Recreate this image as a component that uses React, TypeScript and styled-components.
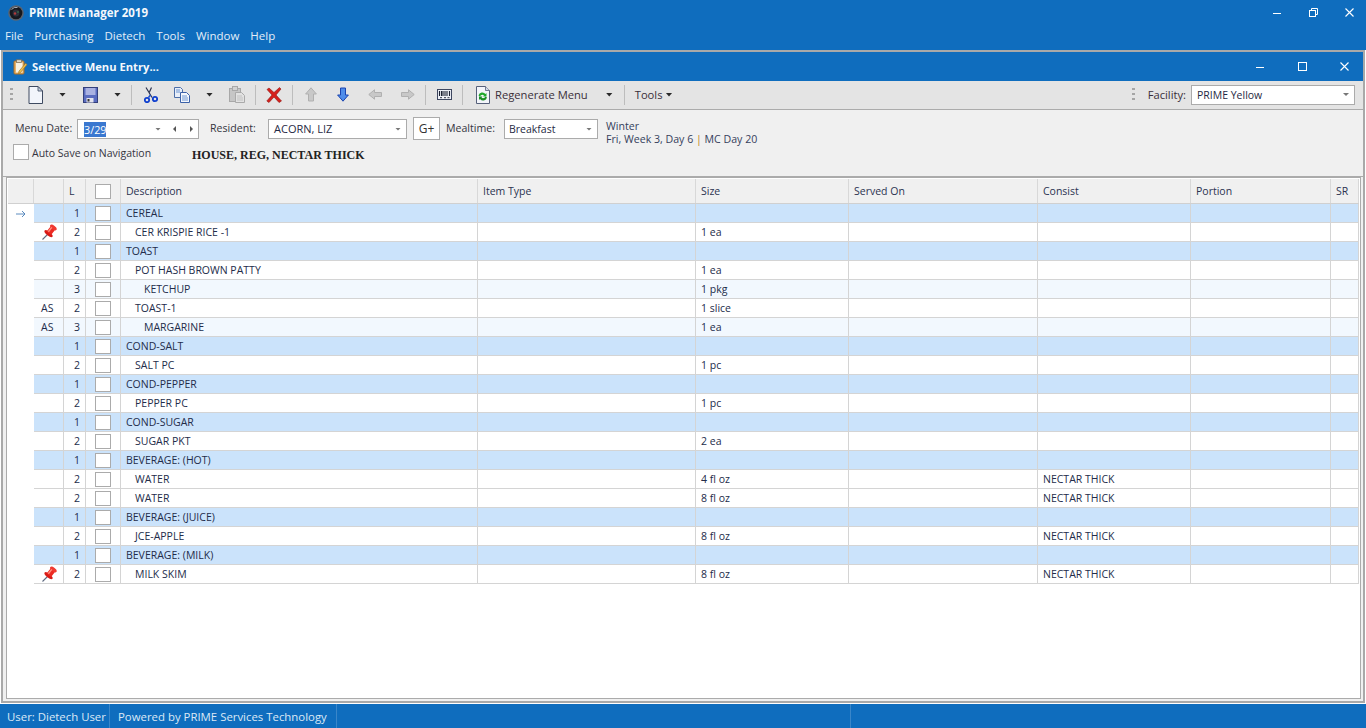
import React from "react";
import styled, { createGlobalStyle } from "styled-components";

const Global = createGlobalStyle`
  html, body { margin: 0; padding: 0; width: 1366px; height: 728px; overflow: hidden; background: #fff; }
  * { box-sizing: border-box; }
  body { font-family: "Open Sans", "Noto Sans", sans-serif; font-size: 11px; color: #1f2a44; }
`;

const BLUE = "#0f6dbe";

const Shell = styled.div`
  width: 1366px; height: 728px; display: flex; flex-direction: column; background: #fff;
`;
const TitleBar = styled.div`
  height: 25px; background: ${BLUE}; display: flex; align-items: center; color: #fff; padding-left: 8px; flex: none;
`;
const AppName = styled.span`
  margin-left: 5px; font-weight: 700; font-size: 11.5px; color: #f4f8fc;
`;
const Controls = styled.div<{ $gap: number }>`
  margin-left: auto; display: flex; gap: ${p => p.$gap}px; height: 100%;
`;
const ControlBtn = styled.div<{ $w: number }>`
  width: ${p => p.$w}px; display: flex; align-items: center; justify-content: center;
`;
const MenuBar = styled.div`
  height: 25px; background: ${BLUE}; display: flex; gap: 11px; align-items: center; padding: 0 0 4px 5px; flex: none; color: #e4eef8; font-size: 11.5px;
`;
const Win = styled.div`
  flex: 1; min-height: 0; margin: 0 1px 1px 1px; border: 2px solid #a9a9a9; display: flex; flex-direction: column; background: #f0f0f0; width: 1364px;
`;
const WinTitle = styled.div`
  height: 29px; flex: none; background: ${BLUE}; display: flex; align-items: center; padding-left: 10px; color: #fff;
`;
const WinName = styled.span`
  margin-left: 4px; font-weight: 700; font-size: 11.2px; color: #f4f8fc;
`;
const Toolbar = styled.div`
  height: 29px; flex: none; background: #e4e4e4; border-bottom: 1px solid #ababab; display: flex; align-items: center; font-size: 11.2px; padding-bottom: 1px;
`;
const Slot = styled.div<{ $ml: number }>`
  margin-left: ${p => p.$ml}px; flex: none; display: flex; align-items: center; justify-content: center;
`;
const Grip = styled.div<{ $ml: number }>`
  margin-left: ${p => p.$ml}px; width: 3px; height: 13px; flex: none;
  background: repeating-linear-gradient(to bottom, #a5a5a5 0 2px, transparent 2px 5px);
`;
const Sep = styled.div<{ $ml: number }>`
  margin-left: ${p => p.$ml}px; width: 1px; height: 20px; background: #bdbdbd; flex: none;
`;
const Caret = styled.div<{ $ml: number }>`
  margin-left: ${p => p.$ml}px; flex: none; width: 7px; height: 4px;
  background: #2a2a2a; clip-path: polygon(0 0, 100% 0, 50% 100%);
`;
const FieldCaret = styled.div`
  flex: none; width: 6px; height: 3px; background: #777; clip-path: polygon(0 0, 100% 0, 50% 100%);
`;
const ToolText = styled.span<{ $ml: number }>`
  margin-left: ${p => p.$ml}px; flex: none; color: #3a2f3a; font-size: 11.2px;
`;
const Spring = styled.div`
  flex: 1;
`;
const FacilitySelect = styled.div`
  margin: 0 8px 0 5px; width: 164px; height: 20px; background: #fff; border: 1px solid #ababab; display: flex; align-items: center; padding: 0 5px; font-size: 10.5px; justify-content: space-between;
`;
const FormPanel = styled.div`
  height: 67px; flex: none; background: #f0f0f0; border-bottom: 1px solid #ababab; padding: 7px 0 0 12px;
`;
const FormRow = styled.div`
  display: flex; align-items: flex-start; height: 25px;
`;
const Label = styled.span<{ $ml?: number; $w: number }>`
  margin: 1px 0 0 ${p => p.$ml || 0}px; width: ${p => p.$w}px; flex: none; line-height: 20px; font-size: 10.6px; color: #35353f;
`;
const Field = styled.div<{ $w: number }>`
  width: ${p => p.$w}px; height: 20px; margin-top: 2px; flex: none; background: #fff; border: 1px solid #ababab; display: flex; align-items: center; padding: 0 5px; font-size: 11px; line-height: 18px;
`;
const MealField = styled(Field)`
  font-size: 10.5px; padding-left: 4px;
`;
const Selected = styled.span`
  background: #3a78d0; color: #fff; padding: 0; margin-left: 1px; height: 15px; line-height: 15px; display: block; flex: none; font-size: 10.8px;
`;
const FieldCarets = styled.div`
  margin-left: auto; display: flex; align-items: center; gap: 11px;
`;
const SideCaret = styled.div<{ $dir: "l" | "r"; $ml: number }>`
  width: 3px; height: 6px; margin-left: ${p => p.$ml}px; background: #555;
  clip-path: ${p => p.$dir === "l" ? "polygon(100% 0, 100% 100%, 0 50%)" : "polygon(0 0, 0 100%, 100% 50%)"};
`;
const GButton = styled.div`
  width: 27px; height: 23px; margin: 0 6px; flex: none; background: #fff; border: 1px solid #ababab; display: flex; align-items: center; justify-content: center; font-size: 12px; color: #333;
`;
const SeasonBox = styled.div`
  margin: 3px 0 0 8px; line-height: 13px; font-size: 10.6px; color: #35405c;
`;
const Bar = styled.span`
  color: #c07a20;
`;
const CheckRow = styled.div`
  display: flex; align-items: flex-start; margin-left: -2px; height: 18px; margin-top: 2px;
`;
const CheckBox = styled.div`
  width: 16px; height: 16px; flex: none; background: #fff; border: 1px solid #ababab;
`;
const AutoLabel = styled.span`
  margin: 2px 0 0 3px; width: 160px; flex: none; font-size: 10.5px; line-height: 15px; color: #35353f;
`;
const DietText = styled.span`
  font-family: "Liberation Serif", serif; font-weight: 700; font-size: 12px; line-height: 14px; color: #222; margin-top: 4px;
`;
const GridFrame = styled.div`
  flex: 1; min-height: 0; margin: 0 2px 2px 3px; border: 1px solid #ababab; padding: 1px; background: #fff;
`;
const COLS = "26px 30px 22px 35px 357px 218px 153px 189px 153px 140px 28px";
const HeaderRow = styled.div`
  display: grid; grid-template-columns: ${COLS}; height: 25px; background: #f0f0f0; border-bottom: 1px solid #d0d0d0;
`;
const HeadCell = styled.div`
  border-right: 1px solid #d8d8d8; padding-left: 5px; display: flex; align-items: center; font-size: 10.5px; color: #2b3350;
`;
const HeadCheckCell = styled(HeadCell)`
  padding-left: 9px;
`;
const Row = styled.div`
  display: grid; grid-template-columns: ${COLS}; height: 19px;
`;
const GutterCell = styled.div`
  background: #fff; display: flex; align-items: center; justify-content: center;
`;
const Cell = styled.div<{ $lv: number }>`
  background: ${p => p.$lv === 1 ? "#cbe3fb" : p.$lv === 3 ? "#f2f8fe" : "#fff"};
  border-right: 1px solid #d4d4d4; border-bottom: 1px solid #d4d4d4;
  display: flex; align-items: center; padding-left: 5px; font-size: 10.5px; color: #232c4a; white-space: pre;
  overflow: hidden;
`;
const NumCell = styled(Cell)`
  justify-content: flex-end; padding: 0 5px 0 0;
`;
const MarkCell = styled(Cell)`
  padding-left: 7px;
`;
const PinWrap = styled.div`
  margin: 0 0 1px 1px; display: flex;
`;
const CheckCell = styled(Cell)`
  padding-left: 9px;
`;
const DescCell = styled(Cell)<{ $indent: number }>`
  padding-left: ${p => 5 + p.$indent}px;
`;
const RowBox = styled.div`
  width: 16px; height: 15px; flex: none; background: #fff; border: 1px solid #ababab;
`;
const StatusBar = styled.div`
  height: 24px; flex: none; background: ${BLUE}; display: flex; align-items: center; color: #dce9f6; font-size: 11.4px;
`;
const StatusCell = styled.div<{ $w: number; $pl: number }>`
  width: ${p => p.$w}px; height: 100%; padding-left: ${p => p.$pl}px; border-right: 1px solid #3a86c9; display: flex; align-items: center; flex: none; white-space: nowrap;
`;

const ICON = { new: (
  <svg width="15" height="18" viewBox="0 0 15 18"><path d="M1 .5h9l4.500 4.500v12.500H1z" fill="#f2f5fb" stroke="#3e4a60" /><path d="M10 .5V5h4.500z" fill="#c7d0de" stroke="#3e4a60" strokeWidth=".8" /></svg>
), save: (
  <svg width="15" height="16" viewBox="0 0 15 16"><rect x=".5" y=".5" width="14" height="15" fill="#5a6cc0" stroke="#34407c" /><rect x="2.500" y="1" width="10" height="7" fill="#aab2e2" /><rect x="3.500" y="11" width="7" height="4.500" fill="#e4e4ee" /><rect x="4.500" y="12" width="2" height="2.500" fill="#333" /></svg>
), cut: (
  <svg width="14" height="16" viewBox="0 0 14 16"><path d="M2 .5l6 10M7.500.5L5 6" stroke="#2e3550" strokeWidth="1.200" fill="none" /><path d="M6.500 8l-2 2.500" stroke="#1b4fd0" strokeWidth="1.500" /><circle cx="3" cy="13" r="2.200" fill="none" stroke="#0f3fcf" strokeWidth="1.800" /><circle cx="11" cy="12" r="2.200" fill="none" stroke="#0f3fcf" strokeWidth="1.800" /></svg>
), copy: (
  <svg width="16" height="16" viewBox="0 0 16 16"><path d="M.5.500h6l2 2v8h-8z" fill="#e8eef8" stroke="#4c6ea8" /><path d="M6.500 5.500h6l3 3v7h-9z" fill="#f4f7fc" stroke="#3c62a8" /><path d="M8 9h5M8 11h6M8 13h6M2 3h4M2 5h4" stroke="#4c7ec8" strokeWidth=".8" /></svg>
), paste: (
  <svg width="16" height="17" viewBox="0 0 16 17"><rect x=".5" y="2.500" width="11" height="13" fill="#c6c6c6" stroke="#a8a8a8" /><rect x="3.500" y=".5" width="5" height="4" fill="#d2d2d2" stroke="#a8a8a8" /><path d="M6.500 6.500h6l3 3v7h-9z" fill="#e2e2e2" stroke="#aaa" /><path d="M8 10h5M8 12h6M8 14h6" stroke="#bbb" strokeWidth=".8" /></svg>
), del: (
  <svg width="16" height="16" viewBox="0 0 16 16"><path d="M1 2.500L3 1l5 4.500L13.500.5 15 2l-5 6 5.500 6L13 15.500 8 10l-5 5.500L.8 14 6 8z" fill="#d6201c" stroke="#8e1512" strokeWidth=".6" /></svg>
), up: (
  <svg width="12" height="15" viewBox="0 0 12 15"><path d="M6 .8L11.400 7H8.500v7h-5V7H.6z" fill="#c8c8c8" stroke="#b0b0b0" /></svg>
), down: (
  <svg width="12" height="15" viewBox="0 0 12 15"><path d="M6 14.200L11.400 8H8.500V1h-5v7H.6z" fill="#4f8dea" stroke="#1a44b0" /></svg>
), left: (
  <svg width="14" height="11" viewBox="0 0 14 11"><path d="M.8 5.500L6.500.8v2.700h7v4h-7v2.700z" fill="#c8c8c8" stroke="#b0b0b0" /></svg>
), right: (
  <svg width="14" height="11" viewBox="0 0 14 11"><path d="M13.200 5.500L7.500.8v2.700h-7v4h7v2.700z" fill="#c8c8c8" stroke="#b0b0b0" /></svg>
), barcode: (
  <svg width="15" height="11" viewBox="0 0 15 11"><rect x=".5" y=".5" width="14" height="10" fill="#eef1f8" stroke="#3e4760" /><path d="M2.500 2v5M4.500 2v5M6 2v5M8 2v5M10 2v5M12.500 2v5" stroke="#1c2233" strokeWidth="1.100" /><path d="M3 8.700h2M7 8.700h2M10.500 8.700h2" stroke="#1c2233" strokeWidth=".9" /></svg>
), regen: (
  <svg width="16" height="18" viewBox="0 0 16 18"><path d="M1.500.5h9l4 4v13h-13z" fill="#f3f5fa" stroke="#56607a" /><path d="M10.500.5v4h4" fill="#d4dae6" stroke="#56607a" strokeWidth=".8" /><path d="M3.500 9.500a4 4 0 017-1.500l1-1v3.500H8l1-1a2.500 2.500 0 00-4 1z" fill="#1fa82c" /><path d="M12 11.500a4 4 0 01-7 1.500l-1 1v-3.500h3.500l-1 1a2.500 2.500 0 004-1z" fill="#1a8f25" /></svg>
) };

const Logo = () => (
  <svg width="16" height="16" viewBox="0 0 16 16"><circle cx="8" cy="8" r="7.800" fill="#5b6470" /><circle cx="8" cy="8" r="6.300" fill="#16181e" /><circle cx="8" cy="8" r="3.400" fill="#2b2f3a" /><circle cx="7" cy="8.500" r="1.200" fill="#b33a3a" /><circle cx="10" cy="7" r=".7" fill="#3c9c58" /><path d="M3.500 4.500a6 6 0 016-2" stroke="#a8aeb8" fill="none" /></svg>
);
const DocLogo = () => (
  <svg width="15" height="16" viewBox="0 0 15 16"><rect x="1" y="2" width="10" height="13" rx="1" fill="#e8b268" stroke="#a86f28" /><rect x="3" y="3.500" width="6.500" height="10" fill="#f8f2e2" /><rect x="3.500" y=".8" width="5" height="2.800" fill="#ded6c6" stroke="#7a6a50" strokeWidth=".7" /><path d="M14 5.500L7.500 13.500l-2 1 .5-2.300L12.500 4.500z" fill="#eec050" stroke="#a87820" strokeWidth=".7" /></svg>
);
const Min = () => <svg width="8" height="8" viewBox="0 0 8 8"><path d="M0 4.500h8" stroke="#fff" /></svg>;
const Restore = () => <svg width="9" height="9" viewBox="0 0 9 9"><path d="M2.500 2V.5h6v6H7" fill="none" stroke="#fff" /><rect x=".5" y="2.500" width="6" height="6" fill="none" stroke="#fff" /></svg>;
const Max = () => <svg width="9" height="9" viewBox="0 0 9 9"><rect x=".5" y=".5" width="8" height="8" fill="none" stroke="#fff" /></svg>;
const Close = () => <svg width="9" height="9" viewBox="0 0 9 9"><path d="M.5.500l8 8M8.500.5l-8 8" stroke="#fff" strokeWidth="1.100" /></svg>;
const Arrow = () => <svg width="10" height="8" viewBox="0 0 10 8"><path d="M0 4h9M6 1l3 3-3 3" fill="none" stroke="#4a7fb8" strokeWidth=".9" /></svg>;
const Pin = () => (
  <svg width="15" height="16" viewBox="0 0 15 16">
    <path d="M.5 15.500L6 10" stroke="#5f6a80" strokeWidth="1.100" />
    <g transform="rotate(38 9 6.500)">
      <ellipse cx="9" cy="10.500" rx="5" ry="1.900" fill="#d81a16" />
      <rect x="6.200" y="3" width="5.600" height="7" fill="#ec2a22" />
      <ellipse cx="9" cy="2.600" rx="3.900" ry="1.900" fill="#f03a30" />
      <rect x="7" y="3.600" width="1.400" height="5.500" fill="#ff8f80" />
    </g>
  </svg>
);

type R = { l: number; d?: string; ind?: number; size?: string; cons?: string; mark?: "pin" | "AS"; cur?: boolean };
const rows: R[] = [
  { l: 1, d: "CEREAL", cur: true },
  { l: 2, d: "CER KRISPIE RICE -1", ind: 9, size: "1 ea", mark: "pin" },
  { l: 1, d: "TOAST" },
  { l: 2, d: "POT HASH BROWN PATTY", ind: 9, size: "1 ea" },
  { l: 3, d: "KETCHUP", ind: 18, size: "1 pkg" },
  { l: 2, d: "TOAST-1", ind: 9, size: "1 slice", mark: "AS" },
  { l: 3, d: "MARGARINE", ind: 18, size: "1 ea", mark: "AS" },
  { l: 1, d: "COND-SALT" },
  { l: 2, d: "SALT PC", ind: 9, size: "1 pc" },
  { l: 1, d: "COND-PEPPER" },
  { l: 2, d: "PEPPER PC", ind: 9, size: "1 pc" },
  { l: 1, d: "COND-SUGAR" },
  { l: 2, d: "SUGAR PKT", ind: 9, size: "2 ea" },
  { l: 1, d: "BEVERAGE: (HOT)" },
  { l: 2, d: "WATER", ind: 9, size: "4 fl oz", cons: "NECTAR THICK" },
  { l: 2, d: "WATER", ind: 9, size: "8 fl oz", cons: "NECTAR THICK" },
  { l: 1, d: "BEVERAGE: (JUICE)" },
  { l: 2, d: "JCE-APPLE", ind: 9, size: "8 fl oz", cons: "NECTAR THICK" },
  { l: 1, d: "BEVERAGE: (MILK)" },
  { l: 2, d: "MILK SKIM", ind: 9, size: "8 fl oz", cons: "NECTAR THICK", mark: "pin" },
];

export default function App() {
  return (
    <Shell>
      <Global />
      <TitleBar>
        <Logo />
        <AppName>PRIME Manager 2019</AppName>
        <Controls $gap={2}>
          <ControlBtn $w={34}><Min /></ControlBtn>
          <ControlBtn $w={34}><Restore /></ControlBtn>
          <ControlBtn $w={34}><Close /></ControlBtn>
        </Controls>
      </TitleBar>
      <MenuBar>
        <span>File</span><span>Purchasing</span><span>Dietech</span><span>Tools</span><span>Window</span><span>Help</span>
      </MenuBar>
      <Win>
        <WinTitle>
          <DocLogo />
          <WinName>Selective Menu Entry...</WinName>
          <Controls $gap={4}>
            <ControlBtn $w={38}><Min /></ControlBtn>
            <ControlBtn $w={38}><Max /></ControlBtn>
            <ControlBtn $w={38}><Close /></ControlBtn>
          </Controls>
        </WinTitle>
        <Toolbar>
          <Grip $ml={7} />
          <Slot $ml={15}>{ICON.new}</Slot>
          <Caret $ml={16} />
          <Slot $ml={17}>{ICON.save}</Slot>
          <Caret $ml={16} />
          <Sep $ml={10} />
          <Slot $ml={12}>{ICON.cut}</Slot>
          <Slot $ml={16}>{ICON.copy}</Slot>
          <Caret $ml={16} />
          <Slot $ml={16}>{ICON.paste}</Slot>
          <Sep $ml={10} />
          <Slot $ml={10}>{ICON.del}</Slot>
          <Sep $ml={10} />
          <Slot $ml={12}>{ICON.up}</Slot>
          <Slot $ml={20}>{ICON.down}</Slot>
          <Slot $ml={19}>{ICON.left}</Slot>
          <Slot $ml={19}>{ICON.right}</Slot>
          <Sep $ml={10} />
          <Slot $ml={11}>{ICON.barcode}</Slot>
          <Sep $ml={10} />
          <Slot $ml={12}>{ICON.regen}</Slot>
          <ToolText $ml={4}>Regenerate Menu</ToolText>
          <Caret $ml={18} />
          <Sep $ml={11} />
          <ToolText $ml={10}>Tools</ToolText>
          <Caret $ml={3} />
          <Spring />
          <Grip $ml={0} />
          <ToolText $ml={13}>Facility:</ToolText>
          <FacilitySelect>PRIME Yellow<FieldCaret /></FacilitySelect>
        </Toolbar>
        <FormPanel>
          <FormRow>
            <Label $w={62}>Menu Date:</Label>
            <Field $w={122}>
              <Selected>3/29</Selected>
              <FieldCarets><FieldCaret /><SideCaret $dir="l" $ml={1} /><SideCaret $dir="r" $ml={3} /></FieldCarets>
            </Field>
            <Label $ml={11} $w={58}>Resident:</Label>
            <Field $w={139}>ACORN, LIZ<FieldCarets><FieldCaret /></FieldCarets></Field>
            <GButton>G+</GButton>
            <Label $w={58}>Mealtime:</Label>
            <MealField $w={94}>Breakfast<FieldCarets><FieldCaret /></FieldCarets></MealField>
            <SeasonBox>Winter<br />Fri, Week 3, Day 6 <Bar>|</Bar> MC Day 20</SeasonBox>
          </FormRow>
          <CheckRow>
            <CheckBox />
            <AutoLabel>Auto Save on Navigation</AutoLabel>
            <DietText>HOUSE, REG, NECTAR THICK</DietText>
          </CheckRow>
        </FormPanel>
        <GridFrame>
          <HeaderRow>
            <HeadCell /><HeadCell /><HeadCell>L</HeadCell>
            <HeadCheckCell><RowBox /></HeadCheckCell>
            <HeadCell>Description</HeadCell><HeadCell>Item Type</HeadCell><HeadCell>Size</HeadCell>
            <HeadCell>Served On</HeadCell><HeadCell>Consist</HeadCell><HeadCell>Portion</HeadCell><HeadCell>SR</HeadCell>
          </HeaderRow>
          {rows.map((r, i) => (
            <Row key={i}>
              <GutterCell>{r.cur ? <Arrow /> : null}</GutterCell>
              <MarkCell $lv={r.l}>{r.mark === "pin" ? <PinWrap><Pin /></PinWrap> : r.mark === "AS" ? "AS" : null}</MarkCell>
              <NumCell $lv={r.l}>{r.l}</NumCell>
              <CheckCell $lv={r.l}><RowBox /></CheckCell>
              <DescCell $lv={r.l} $indent={r.ind || 0}>{r.d}</DescCell>
              <Cell $lv={r.l} />
              <Cell $lv={r.l}>{r.size}</Cell>
              <Cell $lv={r.l} />
              <Cell $lv={r.l}>{r.cons}</Cell>
              <Cell $lv={r.l} />
              <Cell $lv={r.l} />
            </Row>
          ))}
        </GridFrame>
      </Win>
      <StatusBar>
        <StatusCell $w={110} $pl={7}>User: Dietech User</StatusCell>
        <StatusCell $w={227} $pl={8}>Powered by PRIME Services Technology</StatusCell>
        <StatusCell $w={514} $pl={0} />
      </StatusBar>
    </Shell>
  );
}
